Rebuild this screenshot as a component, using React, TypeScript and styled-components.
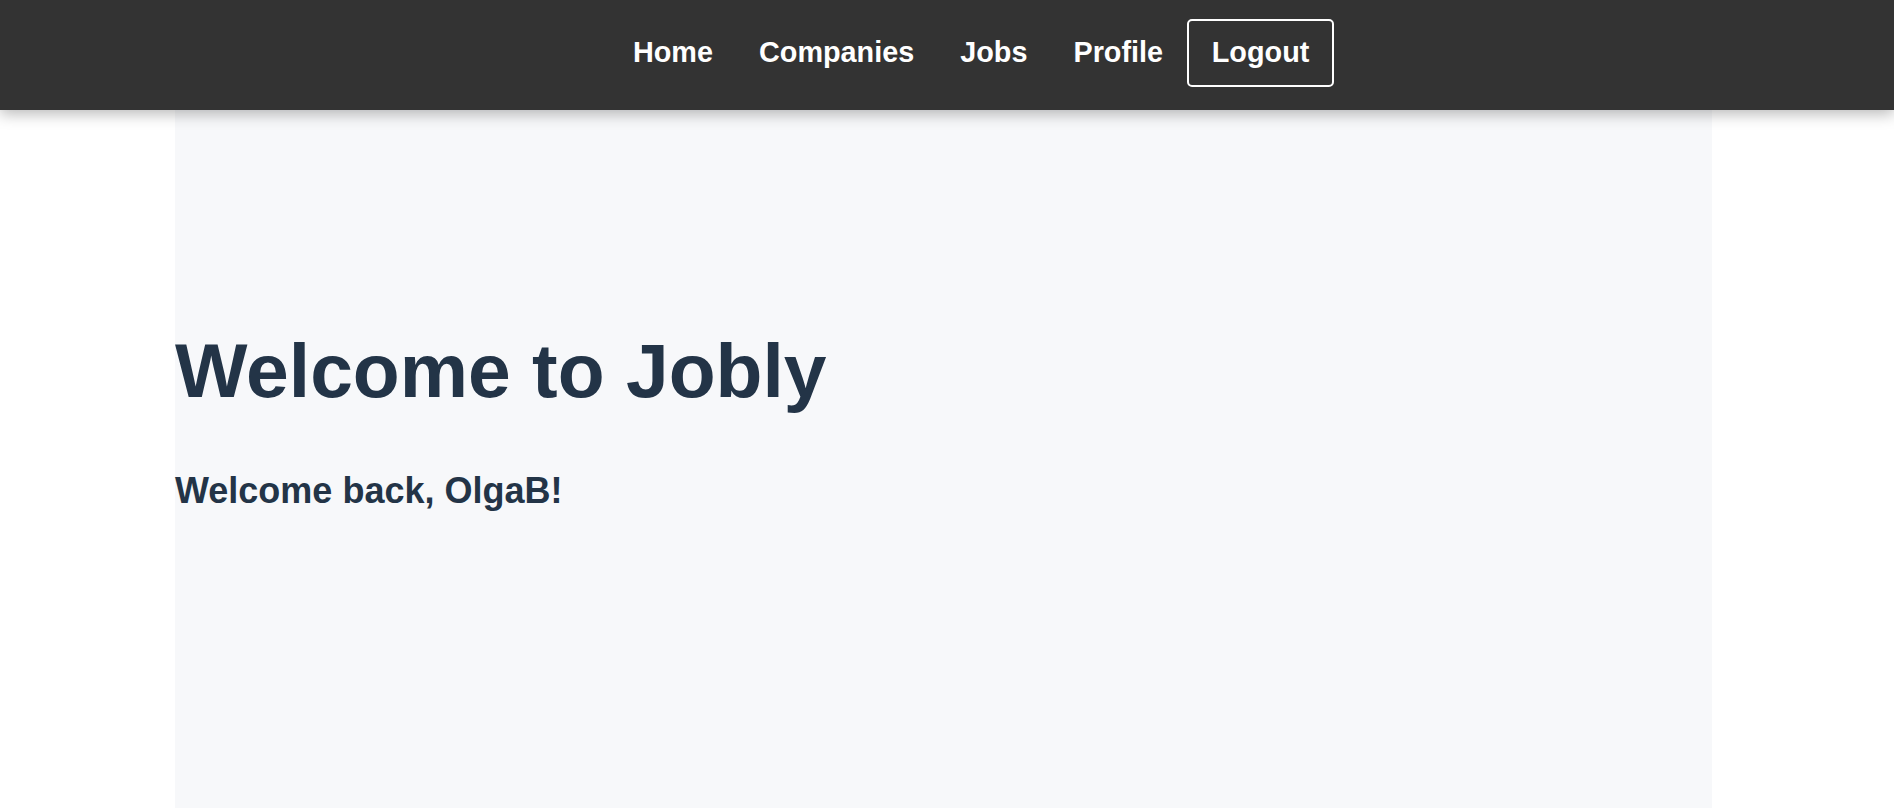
import React from "react";
import styled, { createGlobalStyle } from "styled-components";

const GlobalStyle = createGlobalStyle`
  html, body {
    margin: 0;
    padding: 0;
    background: #ffffff;
    font-family: "Liberation Sans", Arial, sans-serif;
  }
  * { box-sizing: border-box; }
`;

const NavBar = styled.nav`
  position: relative;
  z-index: 2;
  height: 110px;
  background: #333333;
  box-shadow: 0 4px 14px rgba(0, 0, 0, 0.28);
  display: flex;
  align-items: center;
  justify-content: center;
  padding-left: 50px;
  padding-bottom: 4px;
`;

const NavList = styled.ul`
  list-style: none;
  margin: 0;
  padding: 0;
  display: flex;
  align-items: center;
`;

const NavLink = styled.a<{ $outlined?: boolean }>`
  display: block;
  color: #ffffff;
  text-decoration: none;
  font-weight: 700;
  font-size: 28.8px;
  line-height: 1.15;
  padding: ${(p) => (p.$outlined ? "15.5px 22.7px" : "0 23px")};
  margin-left: ${(p) => (p.$outlined ? "1px" : "0")};
  border: ${(p) => (p.$outlined ? "2px solid #ffffff" : "none")};
  border-radius: ${(p) => (p.$outlined ? "5px" : "0")};
  cursor: pointer;
`;

const Panel = styled.main`
  width: 1537px;
  margin-left: 175px;
  min-height: calc(100vh - 110px);
  background: #f7f8fa;
  padding-top: 216px;
`;

const Title = styled.h1`
  margin: 0;
  font-size: 76.8px;
  line-height: 1.15;
  font-weight: 700;
  color: #233447;
`;

const Greeting = styled.h2`
  margin: 55.8px 0 0;
  font-size: 36px;
  line-height: 1.15;
  font-weight: 700;
  color: #233447;
`;

export default function App() {
  const links = ["Home", "Companies", "Jobs", "Profile"];
  return (
    <>
      <GlobalStyle />
      <NavBar>
        <NavList>
          {links.map((l) => (
            <li key={l}>
              <NavLink>{l}</NavLink>
            </li>
          ))}
          <li>
            <NavLink $outlined>Logout</NavLink>
          </li>
        </NavList>
      </NavBar>
      <Panel>
        <Title>Welcome to Jobly</Title>
        <Greeting>Welcome back, OlgaB!</Greeting>
      </Panel>
    </>
  );
}
